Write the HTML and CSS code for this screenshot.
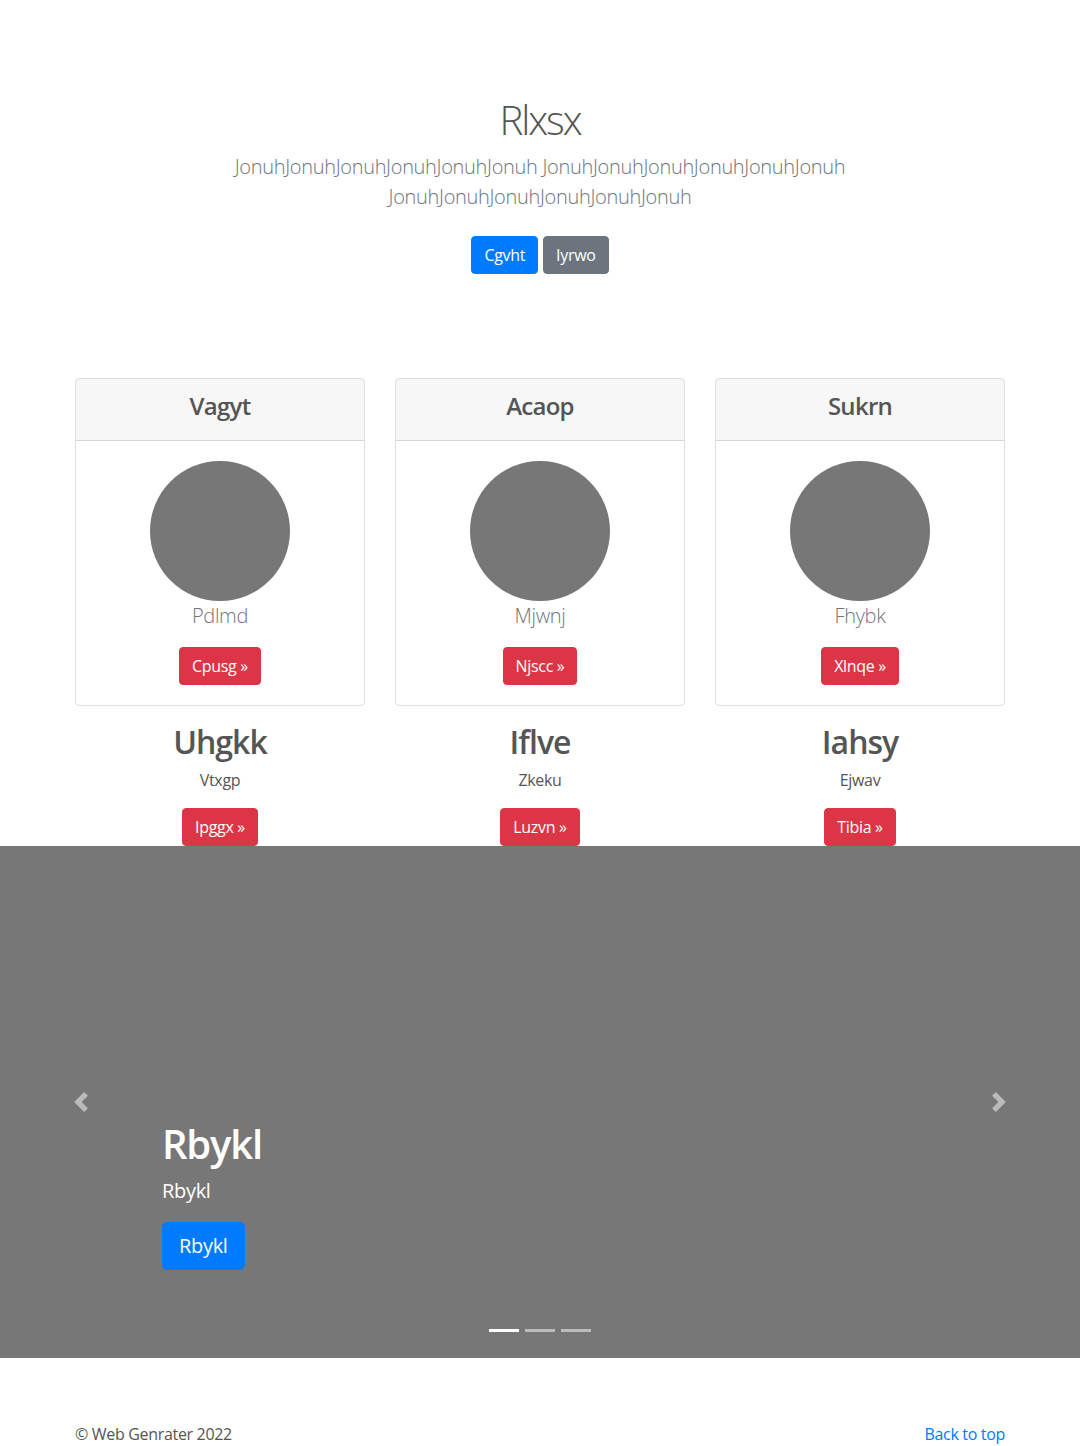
FILE: index.html
```html
<!DOCTYPE html>
<html lang="en">
<head>
<meta charset="utf-8">
<title>Rlxsx</title>
<link rel="stylesheet" href="styles.css">
</head>
<body>
<main>
  <section class="hero">
    <div class="hero-inner">
      <h1 class="hero-title">Rlxsx</h1>
      <p class="lead">JonuhJonuhJonuhJonuhJonuhJonuh JonuhJonuhJonuhJonuhJonuhJonuh JonuhJonuhJonuhJonuhJonuhJonuh</p>
      <div class="hero-actions">
        <a href="#" class="btn btn-primary">Cgvht</a>
        <a href="#" class="btn btn-secondary">Iyrwo</a>
      </div>
    </div>
  </section>

  <section class="album">
    <div class="container">
      <div class="row">
        <div class="col">
          <div class="card">
            <div class="card-header"><h4 class="card-title">Vagyt</h4></div>
            <div class="card-body">
              <div class="avatar"></div>
              <p class="card-name">Pdlmd</p>
              <a href="#" class="btn btn-danger">Cpusg &raquo;</a>
            </div>
          </div>
          <h2 class="feature-title">Uhgkk</h2>
          <p class="feature-text">Vtxgp</p>
          <a href="#" class="btn btn-danger">Ipggx &raquo;</a>
        </div>
        <div class="col">
          <div class="card">
            <div class="card-header"><h4 class="card-title">Acaop</h4></div>
            <div class="card-body">
              <div class="avatar"></div>
              <p class="card-name">Mjwnj</p>
              <a href="#" class="btn btn-danger">Njscc &raquo;</a>
            </div>
          </div>
          <h2 class="feature-title">Iflve</h2>
          <p class="feature-text">Zkeku</p>
          <a href="#" class="btn btn-danger">Luzvn &raquo;</a>
        </div>
        <div class="col">
          <div class="card">
            <div class="card-header"><h4 class="card-title">Sukrn</h4></div>
            <div class="card-body">
              <div class="avatar"></div>
              <p class="card-name">Fhybk</p>
              <a href="#" class="btn btn-danger">Xlnqe &raquo;</a>
            </div>
          </div>
          <h2 class="feature-title">Iahsy</h2>
          <p class="feature-text">Ejwav</p>
          <a href="#" class="btn btn-danger">Tibia &raquo;</a>
        </div>
      </div>
    </div>
  </section>

  <section class="carousel">
    <a href="#" class="carousel-control prev" aria-label="Previous">
      <svg width="20" height="20" viewBox="0 0 8 8"><path fill="#fff" d="M5.25 0l-4 4 4 4 1.5-1.5L4.25 4l2.5-2.5L5.25 0z"/></svg>
    </a>
    <div class="carousel-caption">
      <h1 class="caption-title">Rbykl</h1>
      <p class="caption-text">Rbykl</p>
      <a href="#" class="btn btn-primary btn-lg">Rbykl</a>
    </div>
    <a href="#" class="carousel-control next" aria-label="Next">
      <svg width="20" height="20" viewBox="0 0 8 8"><path fill="#fff" d="M2.75 0l-1.5 1.5L3.75 4l-2.5 2.5L2.75 8l4-4-4-4z"/></svg>
    </a>
    <ol class="indicators">
      <li class="active"></li>
      <li></li>
      <li></li>
    </ol>
  </section>

  <footer class="footer">
    <p class="copy">&copy; Web Genrater 2022</p>
    <a href="#" class="back">Back to top</a>
  </footer>
</main>
</body>
</html>
```

FILE: styles.css
```css
* { box-sizing: border-box; }

html, body {
  margin: 0;
  padding: 0;
}

body {
  font-family: "Open Sans", "Liberation Sans", sans-serif;
  font-size: 16px;
  line-height: 1.5;
  letter-spacing: -0.02em;
  color: #555;
  background: #fff;
}

a { text-decoration: none; }

/* Buttons */
.btn {
  display: inline-block;
  font-size: 16px;
  line-height: 24px;
  padding: 6px 12px;
  border: 1px solid transparent;
  border-radius: 4px;
  color: #fff;
  text-align: center;
}
.btn-primary { background: #007bff; border-color: #007bff; }
.btn-secondary { background: #6c757d; border-color: #6c757d; }
.btn-danger { background: #dc3545; border-color: #dc3545; }
.btn-lg {
  font-size: 20px;
  line-height: 30px;
  padding: 8px 16px;
  border-radius: 5px;
}

/* Hero */
.hero {
  padding: 96px 0 48px;
  text-align: center;
}
.hero-inner {
  max-width: 700px;
  margin: 0 auto;
  padding: 0 15px;
}
.hero-title {
  margin: 0 0 8px;
  font-size: 40px;
  line-height: 48px;
  font-weight: 300;
  letter-spacing: -0.05em;
  color: #555;
}
.lead {
  margin: 0 0 16px;
  font-size: 20px;
  line-height: 30px;
  font-weight: 300;
  color: #6c757d;
}
.hero-actions {
  display: flex;
  justify-content: center;
  gap: 5px;
}
.hero-actions .btn { margin: 8px 0; }

/* Album */
.album { padding-top: 48px; }
.container {
  width: 960px;
  margin: 0 auto;
  padding: 0 15px;
}
.row {
  display: flex;
  margin: 0 -15px;
}
.col {
  flex: 1 1 0;
  padding: 0 15px;
  text-align: center;
}
.card {
  border: 1px solid rgba(0,0,0,.125);
  border-radius: 4px;
  overflow: hidden;
}
.card-header {
  background: rgba(0,0,0,.03);
  border-bottom: 1px solid rgba(0,0,0,.125);
  padding: 13px 20px 11px;
}
.card-title {
  margin: 0 0 8px;
  font-size: 24px;
  line-height: 28.8px;
  font-weight: 600;
  letter-spacing: -0.03em;
  color: #555;
}
.card-body { padding: 20px; }
.avatar {
  width: 140px;
  height: 140px;
  border-radius: 50%;
  background: #777;
  margin: 0 auto;
}
.card-name {
  margin: 0 0 16px;
  font-size: 20px;
  line-height: 30px;
  font-weight: 300;
  color: #6c757d;
}
.feature-title {
  margin: 17px 0 7px;
  font-size: 32px;
  line-height: 38.4px;
  font-weight: 600;
  letter-spacing: -0.03em;
  color: #555;
}
.feature-text {
  margin: 0 0 16px;
}

/* Carousel */
.carousel {
  position: relative;
  height: 512px;
  background: #777;
  margin-bottom: 64px;
}
.carousel-control {
  position: absolute;
  top: 0;
  bottom: 0;
  width: 15%;
  display: flex;
  align-items: center;
  justify-content: center;
  opacity: .5;
}
.carousel-control.prev { left: 0; }
.carousel-control.next { right: 0; }
.carousel-control svg { display: block; }
.carousel-caption {
  position: absolute;
  left: 15%;
  right: 15%;
  bottom: 52px;
  padding: 20px 0;
  color: #fff;
  text-align: left;
}
.caption-title {
  margin: 0 0 8px;
  font-size: 40px;
  line-height: 48px;
  font-weight: 600;
  letter-spacing: -0.03em;
}
.caption-text {
  margin: 0 0 16px;
  font-size: 20px;
  line-height: 30px;
}
.caption-text + .btn { margin-bottom: 16px; }
.indicators {
  position: absolute;
  left: 0;
  right: 0;
  bottom: 26px;
  display: flex;
  justify-content: center;
  margin: 0;
  padding: 0;
  list-style: none;
}
.indicators li {
  width: 30px;
  height: 3px;
  margin: 0 3px;
  background: #fff;
  opacity: .5;
}
.indicators li.active { opacity: 1; }

/* Footer */
.footer {
  width: 960px;
  margin: 0 auto;
  padding: 0 15px;
  display: flex;
  justify-content: space-between;
  line-height: 24px;
}
.copy { margin: 0; }
.back { color: #007bff; }
```
